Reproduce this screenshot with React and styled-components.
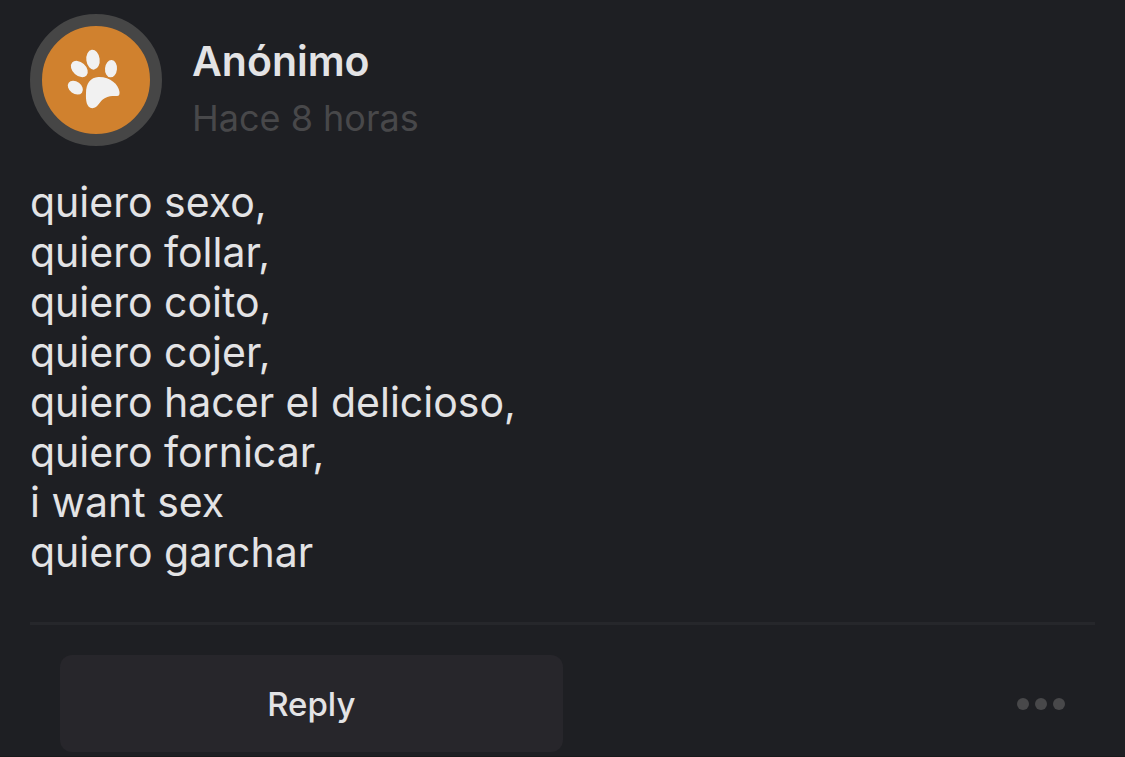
import styled, { createGlobalStyle } from "styled-components";

const GlobalStyle = createGlobalStyle`
  * {
    box-sizing: border-box;
  }
  body {
    margin: 0;
    background: #1e1f23;
    color: #e3e3e5;
    font-family: Inter, "Liberation Sans", sans-serif;
  }
`;

const Post = styled.article`
  padding: 14px 30px 4px;
  border-bottom: 1px solid #18191b;
`;

const Header = styled.header`
  display: flex;
  align-items: flex-end;
  gap: 30px;
`;

const Avatar = styled.div`
  flex: none;
  width: 132px;
  height: 132px;
  border: 12px solid #464646;
  border-radius: 50%;
  background: #d0812e;

  svg {
    display: block;
  }
`;

const Author = styled.h2`
  margin: 0;
  font-size: 41px;
  line-height: 58px;
  font-weight: 600;
`;

const Time = styled.time`
  display: block;
  color: #48484a;
  font-size: 36px;
  line-height: 56px;
`;

const Body = styled.p`
  margin: 0;
  padding: 31px 0 45px;
  font-size: 41px;
  line-height: 50px;
  white-space: pre-line;
`;

const Footer = styled.footer`
  display: flex;
  align-items: center;
  justify-content: space-between;
  padding: 30px 30px 0;
  border-top: 3px solid #26272b;
`;

const ReplyButton = styled.button`
  width: 50%;
  height: 97px;
  border: none;
  border-radius: 12px;
  background: #27262b;
  color: #e3e3e5;
  font-family: inherit;
  font-size: 33px;
  font-weight: 500;
  cursor: pointer;
`;

const MoreButton = styled.button`
  display: flex;
  gap: 6px;
  padding: 20px 0;
  border: none;
  background: none;
  cursor: pointer;
`;

const Dot = styled.span`
  width: 12px;
  height: 12px;
  border-radius: 50%;
  background: #48484a;
`;

const text = `quiero sexo,
quiero follar,
quiero coito,
quiero cojer,
quiero hacer el delicioso,
quiero fornicar,
i want sex
quiero garchar`;

function Paw() {
  return (
    <svg width="108" height="108" viewBox="-54 -42 324 324" fill="#f1f1f1" aria-hidden="true">
      <ellipse cx="99" cy="59" rx="20" ry="30" transform="rotate(-7 99 59)" />
      <ellipse cx="58" cy="87" rx="29" ry="20" transform="rotate(42 58 87)" />
      <ellipse cx="153" cy="86" rx="18" ry="26" transform="rotate(5 153 86)" />
      <ellipse cx="46" cy="143" rx="25" ry="18" transform="rotate(37 46 143)" />
      <path d="M115 111C92 112 78 130 78 160C77 180 79 204 97 205C115 204 117 184 134 175C148 167 160 168 171 168C178 168 180 162 178 153C175 134 151 110 115 111Z" />
    </svg>
  );
}

function App() {
  return (
    <>
      <GlobalStyle />
      <Post>
        <Header>
          <Avatar>
            <Paw />
          </Avatar>
          <div>
            <Author>Anónimo</Author>
            <Time>Hace 8 horas</Time>
          </div>
        </Header>
        <Body>{text}</Body>
        <Footer>
          <ReplyButton type="button">Reply</ReplyButton>
          <MoreButton type="button" aria-label="More options">
            <Dot />
            <Dot />
            <Dot />
          </MoreButton>
        </Footer>
      </Post>
    </>
  );
}

export default App;
